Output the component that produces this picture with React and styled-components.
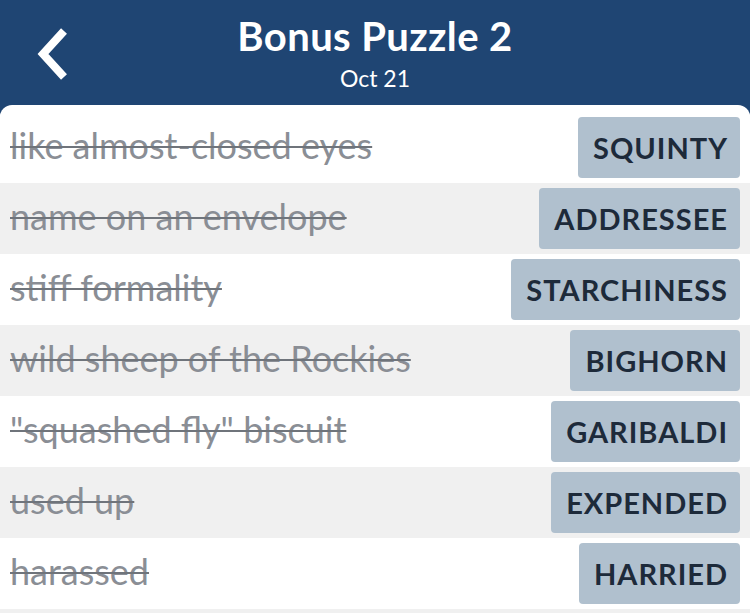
import * as React from 'react';
import styled, { createGlobalStyle } from 'styled-components';

const clues = [
  { clue: 'like almost-closed eyes', answer: 'SQUINTY' },
  { clue: 'name on an envelope', answer: 'ADDRESSEE' },
  { clue: 'stiff formality', answer: 'STARCHINESS' },
  { clue: 'wild sheep of the Rockies', answer: 'BIGHORN' },
  { clue: '"squashed fly" biscuit', answer: 'GARIBALDI' },
  { clue: 'used up', answer: 'EXPENDED' },
  { clue: 'harassed', answer: 'HARRIED' },
];

const GlobalStyle = createGlobalStyle`
  html, body {
    margin: 0;
    padding: 0;
    background: #1f4573;
    overflow: hidden;
  }
  body {
    font-family: Lato, "Noto Sans", sans-serif;
  }
`;

const Page = styled.div`
  width: 750px;
  height: 613px;
  display: flex;
  flex-direction: column;
  background: #1f4573;
  overflow: hidden;
`;

const Header = styled.header`
  height: 105px;
  flex-shrink: 0;
  display: grid;
  grid-template-columns: 100px 1fr 100px;
  align-items: start;
  color: #fff;
`;

const BackButton = styled.button`
  background: none;
  border: 0;
  padding: 0 0 0 34px;
  margin-top: 27px;
  display: flex;
  align-items: center;
  cursor: pointer;
`;

const TitleBlock = styled.div`
  display: flex;
  flex-direction: column;
  align-items: center;
  padding-top: 11px;
`;

const Title = styled.h1`
  margin: 0;
  font-size: 40px;
  font-weight: 700;
  line-height: 50px;
  letter-spacing: 0.4px;
`;

const Subtitle = styled.div`
  font-size: 23px;
  line-height: 28px;
  margin-top: 3px;
`;

const Panel = styled.main`
  flex: 1;
  display: flex;
  flex-direction: column;
  background: #fff;
  border-radius: 12px 12px 0 0;
  padding-top: 7px;
  overflow: hidden;
`;

const Row = styled.div`
  height: 71px;
  flex-shrink: 0;
  display: flex;
  align-items: center;
  justify-content: space-between;
  padding: 0 10px;
  background: ${(p) => (p.$shaded ? '#f0f0f0' : '#fff')};
`;

const Filler = styled.div`
  flex: 1;
  background: #f0f0f0;
`;

const Clue = styled.span`
  font-size: 36px;
  line-height: 44px;
  padding-bottom: 5px;
  color: #8a8e95;
  text-decoration: line-through;
  text-decoration-color: #6f747b;
  text-decoration-thickness: 2px;
  white-space: nowrap;
`;

const Answer = styled.span`
  height: 61px;
  display: flex;
  align-items: center;
  padding: 0 12px 0 15px;
  background: #b0c0ce;
  border-radius: 4px;
  color: #1d2a3a;
  font-size: 29px;
  font-weight: 700;
  letter-spacing: 1px;
`;

function BackIcon() {
  return (
    <svg width="36" height="54" viewBox="0 0 36 54">
      <polyline
        points="30,4 9,27 30,50"
        fill="none"
        stroke="#fff"
        strokeWidth="8"
        strokeLinecap="butt"
        strokeLinejoin="miter"
      />
    </svg>
  );
}

export default function App() {
  return (
    <>
      <GlobalStyle />
      <Page>
        <Header>
          <BackButton aria-label="Back">
            <BackIcon />
          </BackButton>
          <TitleBlock>
            <Title>Bonus Puzzle 2</Title>
            <Subtitle>Oct 21</Subtitle>
          </TitleBlock>
          <div />
        </Header>
        <Panel>
          {clues.map((c, i) => (
            <Row key={c.answer} $shaded={i % 2 === 1}>
              <Clue>{c.clue}</Clue>
              <Answer>{c.answer}</Answer>
            </Row>
          ))}
          <Filler />
        </Panel>
      </Page>
    </>
  );
}
